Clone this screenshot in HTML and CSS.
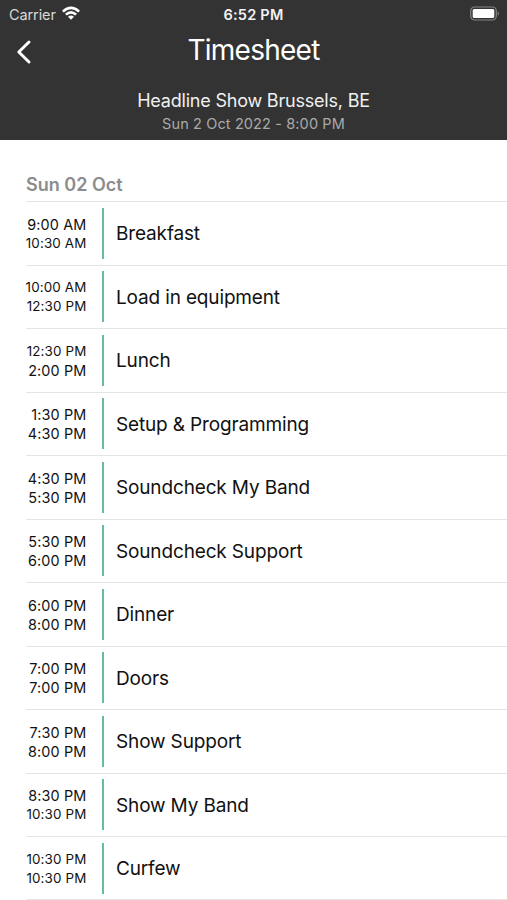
FILE: index.html
```html
<!DOCTYPE html>
<html lang="en">
<head>
<meta charset="utf-8">
<title>Timesheet</title>
<link rel="stylesheet" href="styles.css">
</head>
<body>
<header class="header">
  <div class="status">
    <div class="carrier"><span>Carrier</span>
      <svg class="wifi" width="18" height="14" viewBox="0 0 18 14"><path d="M0 4.7Q9-3.5 18 4.7L16.2 6.5Q9 .2 1.8 6.5ZM3 7.7Q9 2.4 15 7.7L13.2 9.5Q9 6 4.8 9.5ZM6 10.7Q9 8.2 12 10.7L9 13.8Z" fill="#fff"/></svg>
    </div>
    <span class="clock">6:52 PM</span>
    <svg class="battery" width="32" height="16" viewBox="0 0 32 16"><rect x="1.7" y="1" width="25.6" height="13" rx="4" fill="none" stroke="#858585" stroke-width="1.2"/><rect x="3.7" y="3" width="21.6" height="9" rx="1.5" fill="#fff"/><path d="M28.7 5.2Q31.2 7.5 28.7 9.8Z" fill="#858585"/></svg>
  </div>
  <div class="nav">
    <svg class="back" width="18" height="26" viewBox="0 0 18 26"><path d="M14 3 3.8 13 14 23" fill="none" stroke="#fff" stroke-width="3" stroke-linecap="round" stroke-linejoin="round"/></svg>
    <h1 class="title">Timesheet</h1>
  </div>
  <p class="show">Headline Show Brussels, BE</p>
  <p class="date">Sun 2 Oct 2022 - 8:00 PM</p>
</header>
<main class="list">
  <h2 class="day">Sun 02 Oct</h2>
  <div class="row"><div class="times"><span>9:00 AM</span><span class="long">10:30 AM</span></div><div class="bar"></div><span class="name">Breakfast</span></div>
  <div class="row"><div class="times"><span class="long">10:00 AM</span><span class="long">12:30 PM</span></div><div class="bar"></div><span class="name">Load in equipment</span></div>
  <div class="row"><div class="times"><span class="long">12:30 PM</span><span>2:00 PM</span></div><div class="bar"></div><span class="name">Lunch</span></div>
  <div class="row"><div class="times"><span>1:30 PM</span><span>4:30 PM</span></div><div class="bar"></div><span class="name">Setup &amp; Programming</span></div>
  <div class="row"><div class="times"><span>4:30 PM</span><span>5:30 PM</span></div><div class="bar"></div><span class="name">Soundcheck My Band</span></div>
  <div class="row"><div class="times"><span>5:30 PM</span><span>6:00 PM</span></div><div class="bar"></div><span class="name">Soundcheck Support</span></div>
  <div class="row"><div class="times"><span>6:00 PM</span><span>8:00 PM</span></div><div class="bar"></div><span class="name">Dinner</span></div>
  <div class="row"><div class="times"><span>7:00 PM</span><span>7:00 PM</span></div><div class="bar"></div><span class="name">Doors</span></div>
  <div class="row"><div class="times"><span>7:30 PM</span><span>8:00 PM</span></div><div class="bar"></div><span class="name">Show Support</span></div>
  <div class="row"><div class="times"><span>8:30 PM</span><span class="long">10:30 PM</span></div><div class="bar"></div><span class="name">Show My Band</span></div>
  <div class="row"><div class="times"><span class="long">10:30 PM</span><span class="long">10:30 PM</span></div><div class="bar"></div><span class="name">Curfew</span></div>
</main>
</body>
</html>
```
FILE: styles.css
```css
* { box-sizing: border-box; margin: 0; padding: 0; }
body { width: 507px; height: 900px; overflow: hidden; background: #fff; color: #111; font-family: Inter, "Liberation Sans", sans-serif; }
.header { height: 140px; background: #333; color: #fff; text-align: center; }
.status { display: grid; grid-template-columns: 1fr auto 1fr; align-items: center; height: 28px; padding: 0 6px 0 9px; }
.carrier { display: flex; align-items: center; gap: 6px; font-size: 14.5px; letter-spacing: -0.1px; color: #d8d8d8; }
.wifi { margin-top: -2px; }
.clock { margin-left: -3px; font-size: 14.5px; font-weight: 600; letter-spacing: 0.25px; color: #f2f2f2; }
.battery { justify-self: end; margin-top: -1px; }
.nav { display: grid; grid-template-columns: 40px 1fr 40px; align-items: center; height: 44px; }
.back { margin: 4px 0 0 15px; }
.title { font-size: 28px; font-weight: 400; line-height: 44px; letter-spacing: -0.75px; }
.show { margin-top: 17px; font-size: 18px; line-height: 24px; letter-spacing: -0.2px; color: #f0f0f0; }
.date { font-size: 14.5px; line-height: 22px; letter-spacing: 0.12px; color: #aaa; }
.list { padding-left: 26px; }
.day { height: 61px; padding-top: 33px; font-size: 18px; line-height: 24px; font-weight: 600; color: #8c8c8c; }
.row { display: flex; align-items: center; height: 63.5px; border-top: 1px solid #e4e4e4; }
.row:last-child { height: 64px; border-bottom: 1px solid #e4e4e4; }
.times { display: flex; flex-direction: column; align-items: flex-end; width: 60.5px; padding-top: 1px; font-size: 14.4px; line-height: 19px; letter-spacing: 0.15px; white-space: nowrap; }
.long { font-size: 13.4px; }
.bar { width: 2px; height: 51px; margin: 0 12px 0 15.5px; background: #65bd9f; }
.name { padding-top: 2px; font-size: 19px; line-height: 26px; letter-spacing: -0.15px; }
```
